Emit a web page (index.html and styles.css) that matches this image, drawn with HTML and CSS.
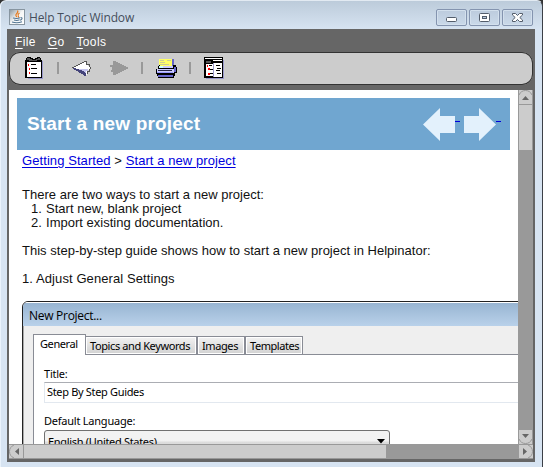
FILE: index.html
```
<!DOCTYPE html>
<html lang="en">
<head>
<meta charset="utf-8">
<title>Help Topic Window</title>
<link rel="stylesheet" href="styles.css">
</head>
<body>
<div class="window">
  <header class="titlebar">
    <svg class="app-icon" width="16" height="16" viewBox="0 0 16 16">
      <defs><linearGradient id="ji" x1="0" y1="0" x2="1" y2="1"><stop offset="0" stop-color="#8a959c"/><stop offset=".5" stop-color="#f6f7f7"/><stop offset="1" stop-color="#fff"/></linearGradient></defs>
      <rect x=".5" y=".5" width="15" height="15" fill="url(#ji)" stroke="#8795a0"/>
      <path d="M8.5 1.5Q9.5 3 7.5 4.8Q6 6.5 8 8M10.5 4Q8.5 5.2 9.2 6.5Q10 7.5 9 8.5" fill="none" stroke="#e47d24" stroke-width="1.2"/>
      <path d="M4 9Q8 10 11 8.8M5 11Q8 12 10.5 10.8M3 13Q8 14.7 13 12.8M11.5 8.5Q14 8.5 12.5 10.5L11 11.3" fill="none" stroke="#537693" stroke-width="1.1"/>
    </svg>
    <h1 class="caption">Help Topic Window</h1>
    <div class="window-buttons">
      <button class="wbtn" aria-label="Minimize"><svg width="13" height="11" viewBox="0 0 13 11"><rect x="1.5" y="5.5" width="10" height="4" rx="1" fill="#fff" stroke="#535d6b"/></svg></button>
      <button class="wbtn" aria-label="Maximize"><svg width="13" height="11" viewBox="0 0 13 11"><rect x="1.5" y="1.5" width="10" height="8" rx="1" fill="#fff" stroke="#535d6b"/><rect x="4.5" y="4.5" width="4" height="2" fill="#b9cade" stroke="#535d6b"/></svg></button>
      <button class="wbtn" aria-label="Close"><svg width="13" height="11" viewBox="0 0 13 11"><path d="M1.5 1.5H4.5L6.5 3.5L8.5 1.5H11.5V3L8.8 5.5L11.5 8V9.5H8.5L6.5 7.5L4.5 9.5H1.5V8L4.2 5.5L1.5 3Z" fill="#fff" stroke="#535d6b"/></svg></button>
    </div>
  </header>
  <main class="frame">
    <nav class="menu"><span><u>F</u>ile</span><span><u>G</u>o</span><span><u>T</u>ools</span></nav>
    <div class="toolbar">
      <svg width="524" height="34" viewBox="9 52 524 34" shape-rendering="crispEdges">
        <path d="M28 61H43V79H28Z" fill="#99c"/>
        <path d="M25 60H26V58H27V57H31V58H33V59H35V58H37V57H40V58H41V60H42V78H25Z" fill="#000"/>
        <path d="M27 62H41V77H27Z" fill="#fff"/><path d="M27 58H30V59H32V60H36V59H38V58H40V60H37V61H29V60H27Z" fill="#555"/>
        <path d="M28 64H29V66H28ZM29 68H30V70H29ZM29 72H30V74H29Z" fill="#f00"/>
        <path d="M31 64H36V65H31ZM31 68H37V69H31ZM31 73H37V74H31Z" fill="#000"/>
        <path d="M57 62H59V74H57ZM141 62H143V74H141ZM189 62H191V74H189Z" fill="#999"/>
        <path d="M73 68L85 61.5H87V65H88V66H90V70H88V72H87V75H86L83 74Z" fill="#fff"/>
        <path d="M75 69H88V71H86V73H83Z" fill="#c4c4ed"/><path d="M72 68H75L77 69L80 70L83 71L86 74V76H85Z" fill="#44447a"/>
        <path d="M72 68L85 61.5H86.5V64.5H89V66.5H90M90 67V69M89 69V71H87V74" fill="none" stroke="#555"/>
        <path d="M113 61H115L128 67.5V68.5L115 75H113V72H111V70H112V67H110V65H113Z" fill="#999"/>
        <path d="M159 59H174V66H159Z" fill="#66c"/><path d="M159 59H172V67H159Z" fill="#ff6"/>
        <path d="M160 60H164V61H160ZM167 60H171V61H167ZM160 62H165V63H160ZM160 64H169V65H160Z" fill="#cc9"/>
        <path d="M158 66H159V65H160V66H173V65H176V67H177V73H175V76H174V78H158V76H157V74H156V69H158Z" fill="#000"/>
        <path d="M159 66H173V68H159Z" fill="#ccf"/><path d="M159 66H163V68H159Z" fill="#cff"/><path d="M157 69H174V73H157Z" fill="#ccf"/><path d="M158 70H172V71H158Z" fill="#224"/><path d="M157 72H173V73H157Z" fill="#99f"/>
        <path d="M158 75H173V77H158Z" fill="#66c"/><path d="M174 67H176V72H174Z" fill="#66c"/>
        <path d="M206 60H224V79H206Z" fill="#99c"/><path d="M204 57H223V78H204Z" fill="#000"/><path d="M205 58H222V59H205ZM213 60H222V61H213Z" fill="#fff"/>
        <path d="M206 64H213V76H206ZM214 63H222V77H214Z" fill="#fff"/><path d="M206 61H211V63H206Z" fill="#555"/><path d="M213 63H214V77H213Z" fill="#99c"/>
        <path d="M207 65H208V67H207ZM208 68H210V70H208ZM208 73H210V75H208Z" fill="#f00"/>
        <path d="M209 65H212V66H209ZM210 69H213V70H210ZM210 73H213V74H210ZM216 65H220V66H216ZM217 68H221V69H217ZM216 70H220V71H216ZM217 73H221V74H217Z" fill="#000"/>
      </svg>
    </div>
    <div class="viewport">
      <article class="page">
        <div class="banner"><h2>Start a new project</h2>
          <svg width="80" height="34" viewBox="0 0 80 34"><path d="M0 16.5L17 0V8H32V25H17V33ZM73 16.5L56 0V8H41V25H56V33Z" fill="#e3f1fc"/><path d="M32 13.5H37M73 13.5H78" stroke="#00d"/></svg>
        </div>
        <p class="crumb"><a href="#a">Getting Started</a> &gt; <a href="#b">Start a new project</a></p>
        <p class="intro">There are two ways to start a new project:</p>
        <ol><li><span>1.</span>Start new, blank project</li><li><span>2.</span>Import existing documentation.</li></ol>
        <p class="guide">This step-by-step guide shows how to start a new project in Helpinator:</p>
        <p class="step">1. Adjust General Settings</p>
        <section class="dialog">
          <h3>New Project...</h3>
          <div class="dialog-body">
            <div class="tabs"><span class="tab active t1">General</span><span class="tab t2">Topics and Keywords</span><span class="tab t3">Images</span><span class="tab t4">Templates</span></div>
            <div class="panel">
              <div class="label l1">Title:</div>
              <div class="field">Step By Step Guides</div>
              <div class="label l2">Default Language:</div>
              <div class="select"><span>English (United States)</span><svg width="8" height="5" viewBox="0 0 8 5"><path d="M0 0H8L4 4.5Z"/></svg></div>
            </div>
          </div>
        </section>
      </article>
      <div class="vscroll"><svg width="15" height="354" viewBox="0 0 15 354">
        <path d="M1 0H14V60H1ZM1 340H14V354H1Z" fill="#ccc"/><path d="M1 5Q3 .5 7.5 .5T14 5M1 14.5H14M1 349Q3 353.5 7.5 353.5T14 349" fill="none" stroke="#999"/><path d="M4 10L7.5 6L11 10ZM4 344H11L7.5 348Z" fill="#666"/></svg></div>
      <div class="hscroll"><svg width="524" height="15" viewBox="0 0 524 15">
        <path d="M0 1H377V14H0ZM510 1H524V14H510Z" fill="#ccc"/><path d="M5 1Q.5 3 .5 7.5T5 14M14.5 1V14M519 1Q523.5 3 523.5 7.5T519 14" fill="none" stroke="#999"/><path d="M10 4V11L6 7.5ZM514 4V11L518 7.5Z" fill="#666"/></svg></div>
    </div>
  </main>
</div>
</body>
</html>
```
FILE: styles.css
```
* { box-sizing: border-box; }
body { margin: 0; background: #333; overflow: hidden; }
h1, h2, h3, p, ol { margin: 0; padding: 0; font-weight: normal; }
svg { display: block; flex: none; }
.window { width: 543px; height: 467px; padding-left: 7px; padding-right: 8px; background: linear-gradient(#bccbda, #d7e4f2 29px); border-top: 1px solid #e2eaf2; border-right: 1px solid #3c4047; border-radius: 6px 6px 0 0; box-shadow: inset 1px 0 #eaf3fc; }
.titlebar { height: 28px; display: flex; align-items: flex-start; padding: 8px 1px 0 2px; }
.caption { margin: 0 auto 0 4px; font: 12px/17px "Open Sans", sans-serif; letter-spacing: -.14px; color: #454e5b; }
.window-buttons { display: flex; gap: 2px; }
.wbtn { width: 31px; height: 17px; padding: 0; border: 1px solid #8494af; border-radius: 2px; background: linear-gradient(#bccbdd, #cad9e9); box-shadow: inset 0 0 0 1px #d3e0ed; display: flex; align-items: center; justify-content: center; }
.frame { width: 528px; height: 433px; background: #666; padding: 0 2px; }
.menu { height: 23px; padding: 4px 0 0 6px; display: flex; gap: 12px; color: #fff; font: 12px/18px "Liberation Sans", sans-serif; letter-spacing: .35px; }
.menu u { text-underline-offset: 2px; }
.toolbar { width: 524px; height: 33px; background: #ccc; box-shadow: inset 0 0 0 1px #333; border-radius: 11px; overflow: hidden; }
.viewport { margin-top: 5px; width: 524px; display: grid; grid-template: 354px 15px / 509px 15px; }
.page { background: #fff; overflow: hidden; padding: 8px 0 0 8px; font: 13px/14px "Liberation Sans", sans-serif; letter-spacing: .015px; color: #111; white-space: nowrap; }
.banner { width: 493px; height: 52px; background: #70a6d0; display: flex; align-items: center; justify-content: space-between; padding: 0 7px 0 10px; }
.banner svg { margin-top: 2px; }
.banner h2 { font: bold 19px/24px "Liberation Sans", sans-serif; letter-spacing: .17px; color: #fff; }
.page > p { padding-left: 5px; }
.crumb { margin-top: 4px; height: 14px; letter-spacing: .08px; }
.crumb a { color: #00d; text-underline-offset: 2px; }
.intro { margin-top: 20px; }
.page ol { list-style: none; padding-left: 14px; }
.page li { display: flex; }
.page li span { width: 15px; }
.guide, .step { margin-top: 14px; }
.page .step { letter-spacing: .09px; }
.dialog { width: 600px; margin: 15px 0 0 5px; height: 200px; border: 1px solid #222; border-radius: 6px; background: #efefef; overflow: hidden; color: #000; font: 11px/15px "Noto Sans", sans-serif; letter-spacing: -.4px; }
.dialog h3 { height: 24px; padding: 5px 0 0 6px; font: 12px/16px "Open Sans", sans-serif; letter-spacing: -.28px; background: linear-gradient(#98b5d2, #b9d1ea); border-top: 1px solid #fff; }
.dialog-body { padding: 8px 0 0 9px; border-left: 1px solid #aaa; }
.tabs { display: flex; align-items: flex-end; height: 21px; position: relative; }
.tab { height: 19px; border: 1px solid #898c95; background: linear-gradient(#f2f2f2, #d2d2d2); padding-left: 4px; line-height: 18px; box-shadow: inset 0 0 0 1px #fff; }
.tab.active { height: 21px; background: #fff; padding-left: 6px; border-bottom: 0; }
.t1 { width: 53px; letter-spacing: -.4px; } .t2 { width: 111px; border-left: 0; letter-spacing: -.4px; } .t3 { width: 48px; } .t4 { width: 58px; letter-spacing: -.45px; }
.panel { border: 1px solid #898c95; background: #fff; height: 160px; padding: 9px 0 0 10px; margin-top: -1px; }
.label { height: 15px; line-height: 15px; letter-spacing: -.23px; }
.l1 { margin: 2px 0 1px; }
.field { height: 21px; border: 1px solid #e2e8ef; border-top-color: #abadb3; padding-left: 2px; line-height: 18px; letter-spacing: -.33px; }
.l2 { margin: 10px 0 2px; }
.select { width: 346px; height: 23px; border: 1px solid #707070; border-radius: 3px; background: linear-gradient(#f2f2f2 45%, #dcdcdc 55%); padding: 0 4px 0 3px; display: flex; justify-content: space-between; align-items: center; letter-spacing: -.32px; }
.vscroll { background: #999; }
.hscroll { grid-column: 1 / 3; background: #999; }
```
